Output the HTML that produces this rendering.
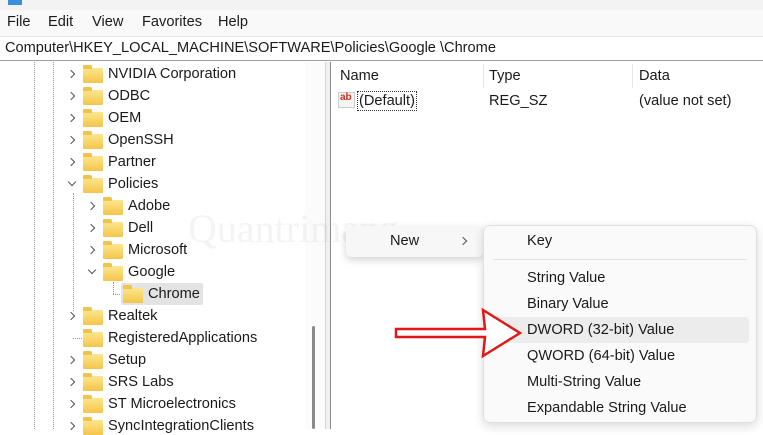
<!DOCTYPE html>
<html><head><style>
*{margin:0;padding:0;box-sizing:border-box}
body{width:763px;height:429px;overflow:hidden;background:#fff;font-family:"Liberation Sans",sans-serif;font-size:14.6px;color:#1a1a1a;position:relative}
.a{position:absolute;white-space:nowrap}
.fold{position:absolute;width:20px;height:15px;background:linear-gradient(#fde58e,#f4c64a);border-radius:1px}
.fold:before{content:"";position:absolute;left:0;top:-3px;width:9px;height:4px;background:#f0c44c;border-radius:1px 2px 0 0}
.chev{position:absolute;width:6px;height:6px;border-right:1.3px solid #555;border-bottom:1.3px solid #555}
.r{transform:rotate(-45deg)}
.d{transform:rotate(45deg)}
</style></head><body>
<div class="a" style="left:0;top:0;width:763px;height:10px;background:#f3f3f3"></div>
<div class="a" style="left:8px;top:0;width:14px;height:5px;background:#3b8ed8"></div>
<div class="a" style="left:0;top:10px;width:763px;height:26px;background:#f9f9f9"></div>
<div class="a" style="left:7px;top:14px">File</div>
<div class="a" style="left:48px;top:14px">Edit</div>
<div class="a" style="left:92px;top:14px">View</div>
<div class="a" style="left:142px;top:14px">Favorites</div>
<div class="a" style="left:218px;top:14px">Help</div>
<div class="a" style="left:0;top:36px;width:763px;height:25px;background:#fff;border-bottom:1px solid #a0a0a0;border-top:1px solid #e8e8e8"></div>
<div class="a" style="left:5px;top:40px">Computer\HKEY_LOCAL_MACHINE\SOFTWARE\Policies\Google \Chrome</div>
<div class="a" style="left:34px;top:62px;height:367px;border-left:1px dotted #999"></div>
<div class="a" style="left:53px;top:62px;height:367px;border-left:1px dotted #999"></div>
<div class="a" style="left:73px;top:193px;height:118px;border-left:1px dotted #999"></div>
<div class="a" style="left:113px;top:282px;height:12px;border-left:1px dotted #999"></div>
<div class="a" style="left:113px;top:294px;width:9px;border-top:1px dotted #999"></div>
<div class="a" style="left:73px;top:338px;width:9px;border-top:1px dotted #999"></div>
<div class="chev r" style="left:68px;top:71px"></div><div class="fold" style="left:83px;top:68px"></div><div class="a" style="left:108px;top:66px">NVIDIA Corporation</div>
<div class="chev r" style="left:68px;top:93px"></div><div class="fold" style="left:83px;top:90px"></div><div class="a" style="left:108px;top:88px">ODBC</div>
<div class="chev r" style="left:68px;top:115px"></div><div class="fold" style="left:83px;top:112px"></div><div class="a" style="left:108px;top:110px">OEM</div>
<div class="chev r" style="left:68px;top:137px"></div><div class="fold" style="left:83px;top:134px"></div><div class="a" style="left:108px;top:132px">OpenSSH</div>
<div class="chev r" style="left:68px;top:159px"></div><div class="fold" style="left:83px;top:156px"></div><div class="a" style="left:108px;top:154px">Partner</div>
<div class="chev d" style="left:69px;top:179px"></div><div class="fold" style="left:83px;top:178px"></div><div class="a" style="left:108px;top:176px">Policies</div>
<div class="chev r" style="left:88px;top:203px"></div><div class="fold" style="left:103px;top:200px"></div><div class="a" style="left:128px;top:198px">Adobe</div>
<div class="chev r" style="left:88px;top:225px"></div><div class="fold" style="left:103px;top:222px"></div><div class="a" style="left:128px;top:220px">Dell</div>
<div class="chev r" style="left:88px;top:247px"></div><div class="fold" style="left:103px;top:244px"></div><div class="a" style="left:128px;top:242px">Microsoft</div>
<div class="chev d" style="left:89px;top:267px"></div><div class="fold" style="left:103px;top:266px"></div><div class="a" style="left:128px;top:264px">Google</div>
<div class="a" style="left:121px;top:283px;width:82px;height:22px;background:#e3e3e3;border-radius:2px"></div>
<div class="fold" style="left:123px;top:288px"></div><div class="a" style="left:148px;top:286px">Chrome</div>
<div class="chev r" style="left:68px;top:313px"></div><div class="fold" style="left:83px;top:310px"></div><div class="a" style="left:108px;top:308px">Realtek</div>
<div class="fold" style="left:83px;top:332px"></div><div class="a" style="left:108px;top:330px">RegisteredApplications</div>
<div class="chev r" style="left:68px;top:357px"></div><div class="fold" style="left:83px;top:354px"></div><div class="a" style="left:108px;top:352px">Setup</div>
<div class="chev r" style="left:68px;top:379px"></div><div class="fold" style="left:83px;top:376px"></div><div class="a" style="left:108px;top:374px">SRS Labs</div>
<div class="chev r" style="left:68px;top:401px"></div><div class="fold" style="left:83px;top:398px"></div><div class="a" style="left:108px;top:396px">ST Microelectronics</div>
<div class="chev r" style="left:68px;top:423px"></div><div class="fold" style="left:83px;top:420px"></div><div class="a" style="left:108px;top:418px">SyncIntegrationClients</div>
<div class="a" style="left:305px;top:62px;width:20px;height:367px;background:#fbfbfb"></div>
<div class="a" style="left:312px;top:326px;width:3px;height:103px;background:#8a8a8a;border-radius:2px"></div>
<div class="a" style="left:325px;top:62px;width:6px;height:367px;background:#f0f0f0;border-left:1px solid #d5d5d5;border-right:1px solid #8a8a8a"></div>
<div class="a" style="left:340px;top:68px">Name</div>
<div class="a" style="left:483px;top:64px;height:24px;border-left:1px solid #e5e5e5"></div>
<div class="a" style="left:489px;top:68px">Type</div>
<div class="a" style="left:632px;top:64px;height:24px;border-left:1px solid #e5e5e5"></div>
<div class="a" style="left:639px;top:68px">Data</div>
<div class="a" style="left:338px;top:92px;width:17px;height:16px;background:#f4f4f4;border:1px solid #ccc;color:#d03020;font-size:10px;font-weight:bold;line-height:9px;padding-left:1px">ab</div>
<div class="a" style="left:357px;top:91px;border:1px dotted #333;padding:1px 1px;line-height:16px">(Default)</div>
<div class="a" style="left:489px;top:93px">REG_SZ</div>
<div class="a" style="left:639px;top:93px">(value not set)</div>
<div class="a" style="left:188px;top:205px;font-size:40px;color:rgba(200,200,200,.2);font-family:'Liberation Serif',serif">Quantrimang</div>
<div class="a" style="left:346px;top:226px;width:137px;height:31px;background:#f7f7f7;border-radius:6px;box-shadow:0 3px 8px rgba(0,0,0,.18)"></div>
<div class="a" style="left:390px;top:233px">New</div>
<div class="chev r" style="left:460px;top:238px"></div>
<div class="a" style="left:483px;top:225px;width:274px;height:198px;background:#fafafa;border:1px solid #e0e0e0;border-radius:7px;box-shadow:0 3px 10px rgba(0,0,0,.15)"></div>
<div class="a" style="left:527px;top:233px">Key</div>
<div class="a" style="left:493px;top:259px;width:254px;border-top:1px solid #e2e2e2"></div>
<div class="a" style="left:527px;top:270px">String Value</div>
<div class="a" style="left:527px;top:296px">Binary Value</div>
<div class="a" style="left:487px;top:317px;width:262px;height:26px;background:#ececec;border-radius:4px"></div>
<div class="a" style="left:527px;top:322px">DWORD (32-bit) Value</div>
<div class="a" style="left:527px;top:348px">QWORD (64-bit) Value</div>
<div class="a" style="left:527px;top:374px">Multi-String Value</div>
<div class="a" style="left:527px;top:400px">Expandable String Value</div>
<svg class="a" style="left:0;top:0" width="763" height="429"><path d="M396 329 L485 329 L483 310 L520 333 L483 356 L485 337 L396 337 Z" fill="#fff" stroke="#e01818" stroke-width="2.5" stroke-linejoin="miter"/></svg>
</body></html>
